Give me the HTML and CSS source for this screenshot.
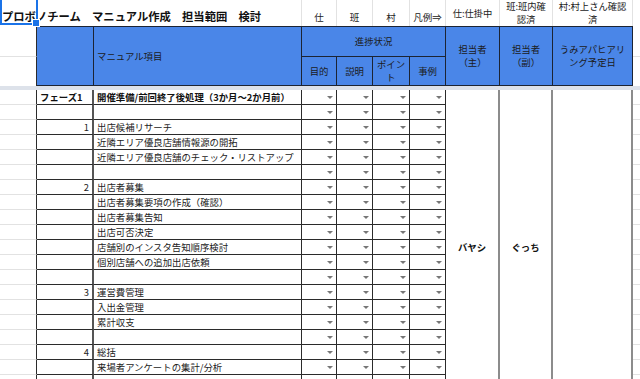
FILE: index.html
```html
<!DOCTYPE html>
<html lang="ja">

<head>
    <meta charset="UTF-8" />
    <meta name="viewport" content="width=device-width, initial-scale=1.0" />
    <title>プロボノチーム マニュアル作成 担当範囲 検討</title>
    <link rel="stylesheet" href="styles.css">
</head>

<body>
    <table class="sheet">
        <colgroup>
            <col class="c-a"><col class="c-b"><col class="c-c">
            <col class="c-d"><col class="c-e"><col class="c-f"><col class="c-g">
            <col class="c-h"><col class="c-i"><col class="c-j"><col class="c-k">
        </colgroup>

        <!-- 1行目 タイトルと凡例 -->
        <tr class="r1">
            <td colspan="3" class="title"><span class="sel"></span>プロボノチーム　マニュアル作成　担当範囲　検討</td>
            <td class="leg">仕</td>
            <td class="leg">班</td>
            <td class="leg">村</td>
            <td class="leg">凡例⇒</td>
            <td class="note">仕:仕掛中</td>
            <td class="note">班:班内確<br>認済</td>
            <td class="note">村:村上さん確認<br>済</td>
            <td></td>
        </tr>

        <!-- 見出し -->
        <tr class="r2">
            <td class="side line"></td>
            <td rowspan="2" class="hd top bot"></td>
            <td rowspan="2" class="hd top bot left">マニュアル項目</td>
            <td colspan="4" class="hd top bot">進捗状況</td>
            <td rowspan="2" class="hd top bot">担当者<br>（主）</td>
            <td rowspan="2" class="hd top bot">担当者<br>（副）</td>
            <td rowspan="2" class="hd top bot">うみアパヒアリ<br>ング予定日</td>
            <td class="line"></td>
        </tr>
        <tr class="r3">
            <td class="side"></td>
            <td class="hd bot">目的</td>
            <td class="hd bot">説明</td>
            <td class="hd bot">ポイン<br>ト</td>
            <td class="hd bot">事例</td>
            <td></td>
        </tr>

        <!-- 固定行の区切り -->
        <tr class="freeze"><td colspan="11"></td></tr>

        <!-- 項目 -->
        <tr class="row">
            <td class="gr side"></td><td class="no b left">フェーズ1</td><td class="item b">開催準備/前回終了後処理（3か月〜2か月前）</td>
            <td class="dd"></td><td class="dd"></td><td class="dd"></td><td class="dd"></td>
            <td rowspan="21" class="who">バヤシ</td>
            <td rowspan="21" class="who">ぐっち</td>
            <td rowspan="21" class="who"></td>
            <td class="gr"></td>
        </tr>
        <tr class="row"><td class="gr side"></td><td class="no"></td><td class="item"></td><td class="dd"></td><td class="dd"></td><td class="dd"></td><td class="dd"></td><td class="gr"></td></tr>
        <tr class="row"><td class="gr side"></td><td class="no">1</td><td class="item">出店候補リサーチ</td><td class="dd"></td><td class="dd"></td><td class="dd"></td><td class="dd"></td><td class="gr"></td></tr>
        <tr class="row"><td class="gr side"></td><td class="no"></td><td class="item">近隣エリア優良店舗情報源の開拓</td><td class="dd"></td><td class="dd"></td><td class="dd"></td><td class="dd"></td><td class="gr"></td></tr>
        <tr class="row"><td class="gr side"></td><td class="no"></td><td class="item">近隣エリア優良店舗のチェック・リストアップ</td><td class="dd"></td><td class="dd"></td><td class="dd"></td><td class="dd"></td><td class="gr"></td></tr>
        <tr class="row"><td class="gr side"></td><td class="no"></td><td class="item"></td><td class="dd"></td><td class="dd"></td><td class="dd"></td><td class="dd"></td><td class="gr"></td></tr>
        <tr class="row"><td class="gr side"></td><td class="no">2</td><td class="item">出店者募集</td><td class="dd"></td><td class="dd"></td><td class="dd"></td><td class="dd"></td><td class="gr"></td></tr>
        <tr class="row"><td class="gr side"></td><td class="no"></td><td class="item">出店者募集要項の作成（確認）</td><td class="dd"></td><td class="dd"></td><td class="dd"></td><td class="dd"></td><td class="gr"></td></tr>
        <tr class="row"><td class="gr side"></td><td class="no"></td><td class="item">出店者募集告知</td><td class="dd"></td><td class="dd"></td><td class="dd"></td><td class="dd"></td><td class="gr"></td></tr>
        <tr class="row"><td class="gr side"></td><td class="no"></td><td class="item">出店可否決定</td><td class="dd"></td><td class="dd"></td><td class="dd"></td><td class="dd"></td><td class="gr"></td></tr>
        <tr class="row"><td class="gr side"></td><td class="no"></td><td class="item">店舗別のインスタ告知順序検討</td><td class="dd"></td><td class="dd"></td><td class="dd"></td><td class="dd"></td><td class="gr"></td></tr>
        <tr class="row"><td class="gr side"></td><td class="no"></td><td class="item">個別店舗への追加出店依頼</td><td class="dd"></td><td class="dd"></td><td class="dd"></td><td class="dd"></td><td class="gr"></td></tr>
        <tr class="row"><td class="gr side"></td><td class="no"></td><td class="item"></td><td class="dd"></td><td class="dd"></td><td class="dd"></td><td class="dd"></td><td class="gr"></td></tr>
        <tr class="row"><td class="gr side"></td><td class="no">3</td><td class="item">運営費管理</td><td class="dd"></td><td class="dd"></td><td class="dd"></td><td class="dd"></td><td class="gr"></td></tr>
        <tr class="row"><td class="gr side"></td><td class="no"></td><td class="item">入出金管理</td><td class="dd"></td><td class="dd"></td><td class="dd"></td><td class="dd"></td><td class="gr"></td></tr>
        <tr class="row"><td class="gr side"></td><td class="no"></td><td class="item">累計収支</td><td class="dd"></td><td class="dd"></td><td class="dd"></td><td class="dd"></td><td class="gr"></td></tr>
        <tr class="row"><td class="gr side"></td><td class="no"></td><td class="item"></td><td class="dd"></td><td class="dd"></td><td class="dd"></td><td class="dd"></td><td class="gr"></td></tr>
        <tr class="row"><td class="gr side"></td><td class="no">4</td><td class="item">総括</td><td class="dd"></td><td class="dd"></td><td class="dd"></td><td class="dd"></td><td class="gr"></td></tr>
        <tr class="row"><td class="gr side"></td><td class="no"></td><td class="item">来場者アンケートの集計/分析</td><td class="dd"></td><td class="dd"></td><td class="dd"></td><td class="dd"></td><td class="gr"></td></tr>
        <tr class="row"><td class="gr side"></td><td class="no"></td><td class="item"></td><td class="dd"></td><td class="dd"></td><td class="dd"></td><td class="dd"></td><td class="gr"></td></tr>
        <tr class="row"><td class="gr side"></td><td class="no"></td><td class="item"></td><td class="dd"></td><td class="dd"></td><td class="dd"></td><td class="dd"></td><td class="gr"></td></tr>
    </table>
</body>

</html>
```

FILE: styles.css
```css
* {
    box-sizing: border-box;
}

html,
body {
    margin: 0;
    height: 100%;
    overflow: hidden;
    background: #fff;
}

body {
    font-family: "Noto Sans CJK JP", "Noto Sans", sans-serif;
    color: #222;
}

/* シート本体 */
.sheet {
    width: 640px;
    table-layout: fixed;
    border-collapse: separate;
    border-spacing: 0;
    font-size: 9.4px;
    line-height: 13px;
}

.sheet td {
    padding: 0 3px;
    white-space: nowrap;
    overflow: hidden;
}

.c-a { width: 37px; }
.c-b { width: 57px; }
.c-c { width: 208px; }
.c-d { width: 35px; }
.c-e { width: 36px; }
.c-f { width: 37px; }
.c-g { width: 36px; }
.c-h { width: 54px; }
.c-i { width: 53px; }
.c-j { width: 80px; }
.c-k { width: 7px; }

/* 行の高さ */
.r1 { height: 26px; }
.r2 { height: 31px; }
.r3 { height: 29px; }
.freeze { height: 4px; }
.row { height: 15px; }

/* 1行目 */
.sheet .title {
    position: relative;
    overflow: visible;
    padding: 0 0 3px 2px;
    vertical-align: bottom;
    font-size: 11.3px;
    line-height: 14px;
    font-weight: bold;
    color: #111;
    border-right: 1px solid #e2e2e2;
}

/* 選択中のセル A1 */
.sel {
    position: absolute;
    left: 0;
    top: -2px;
    width: 38px;
    height: 27px;
    border: 2px solid #1a73e8;
}

.sel::after {
    content: "";
    position: absolute;
    right: -4px;
    bottom: -4px;
    width: 6px;
    height: 6px;
    background: #1a73e8;
    border: 1px solid #fff;
}

.sheet .leg {
    text-align: center;
    vertical-align: bottom;
    padding-bottom: 2px;
    font-size: 9.5px;
    border-right: 1px solid #e2e2e2;
}

.sheet .note {
    text-align: center;
    vertical-align: middle;
    font-size: 9.3px;
    line-height: 13px;
    border-right: 1px solid #e2e2e2;
}

/* 見出し */
.sheet .hd {
    background: #4a86e8;
    color: #1b1b1b;
    text-align: center;
    vertical-align: middle;
    line-height: 13px;
    white-space: normal;
    border-right: 1px solid #1c2433;
}

.sheet .hd.top {
    border-top: 1px solid #1c2433;
}

.sheet .hd.bot {
    border-bottom: 1px solid #1c2433;
}

.sheet .left {
    text-align: left;
}

.sheet .side {
    border-right: 1px solid #2b2b2b;
}

.sheet .line {
    border-bottom: 1px solid #e2e2e2;
}

.freeze td {
    padding: 0;
    height: 4px;
    background: #dde2ea;
}

/* 項目行 */
.sheet .gr {
    border-bottom: 1px solid #e2e2e2;
}

.sheet .no {
    text-align: right;
    border-right: 2px solid #555;
    border-bottom: 1px solid #2b2b2b;
}

.sheet .no.left {
    text-align: left;
}

.sheet .item {
    border-right: 1px solid #2b2b2b;
    border-bottom: 1px solid #2b2b2b;
}

.sheet .b {
    font-weight: bold;
    color: #111;
}

.sheet .dd {
    text-align: right;
    padding-right: 3px;
    border-right: 1px solid #2b2b2b;
    border-bottom: 1px solid #2b2b2b;
}

/* プルダウンの三角 */
.sheet .dd::after {
    content: "";
    display: inline-block;
    vertical-align: middle;
    border-left: 3px solid transparent;
    border-right: 3px solid transparent;
    border-top: 3px solid #767676;
}

.sheet .who {
    text-align: center;
    vertical-align: middle;
    font-weight: bold;
    color: #111;
    border-right: 2px solid #8c8c8c;
}
```
